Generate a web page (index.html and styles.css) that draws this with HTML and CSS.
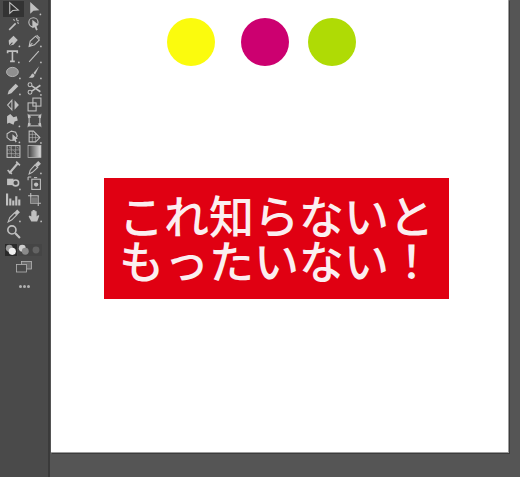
FILE: index.html
```html
<!DOCTYPE html>
<html lang="ja">
<head>
<meta charset="utf-8">
<title>Illustrator</title>
<link rel="stylesheet" href="styles.css">
</head>
<body>
<div class="app">
  <aside class="toolbar">
    <div class="tools">
      <span class="tool active"><svg viewBox="0 0 14 14"><path d="M3.500 1.500v10l2.800-2.600 5.200-.4z" class="ln"/></svg></span>
      <span class="tool"><svg viewBox="0 0 14 14"><path d="M3 1v11l3-3 5.500-.3z" class="fl"/><circle cx="12.500" cy="12.500" r=".8" class="fl"/></svg></span>
      <span class="tool"><svg viewBox="0 0 14 14"><path d="M3 12 9 6" class="ln w2"/><path d="M10 1v2M12 3.500h-2M7 2l1 1.500M12 6l-1.500-.8" class="ln"/></svg></span>
      <span class="tool"><svg viewBox="0 0 14 14"><circle cx="6" cy="5" r="4.300" class="ln"/><path d="M5 2.500 11 7.500 8.500 8 10 12 8.500 12.500 7 9 5 10.500z" class="fl"/></svg></span>
      <span class="tool"><svg viewBox="0 0 14 14"><path d="M3 12 2.500 7 7 2.500l4 4L7 11z" class="fl"/><path d="M3 12l3-3" class="dk"/><circle cx="12.500" cy="12.500" r=".8" class="fl"/></svg></span>
      <span class="tool"><svg viewBox="0 0 14 14"><path d="M2 12.500l1-5L8 3l3.500 3.500L7 11zM2 12.500l3-3M9 2l3 3" class="ln"/><circle cx="13" cy="12.500" r=".8" class="fl"/></svg></span>
      <span class="tool"><svg viewBox="0 0 14 14"><path d="M1.500 4V2h9v2M6 2v9.500M3.800 11.500h4.400" class="ln w2"/><circle cx="12" cy="12.500" r=".8" class="fl"/></svg></span>
      <span class="tool"><svg viewBox="0 0 14 14"><path d="M2 12 11 2" class="ln"/><circle cx="13" cy="12.500" r=".8" class="fl"/></svg></span>
      <span class="tool"><svg viewBox="0 0 14 14"><ellipse cx="6" cy="6.500" rx="5.500" ry="4.300" fill="#8f8f8f" stroke="#bdbdbd" stroke-width=".8"/><circle cx="13" cy="12.500" r=".8" class="fl"/></svg></span>
      <span class="tool"><svg viewBox="0 0 14 14"><path d="M11.500 1 6 7.500l1.500 1.500z" class="fl"/><path d="M5.500 8C3.500 8.500 4 11 1.500 11.500 4 12.500 7 12 7 9.500z" class="fl"/><circle cx="13" cy="12.500" r=".8" class="fl"/></svg></span>
      <span class="tool"><svg viewBox="0 0 14 14"><path d="M1.500 12.500 2.500 9 9 2.500l2.500 2.500L5 11.500z" class="fl"/><circle cx="13" cy="12.500" r=".8" class="fl"/></svg></span>
      <span class="tool"><svg viewBox="0 0 14 14"><circle cx="2.800" cy="3.500" r="1.800" class="ln"/><circle cx="2.800" cy="10.500" r="1.800" class="ln"/><path d="M4.500 4.500 12.500 10M4.500 9.500 12.500 4" class="ln w2"/><circle cx="13" cy="13" r=".8" class="fl"/></svg></span>
      <span class="tool"><svg viewBox="0 0 14 14"><path d="M5.500 3v9L1.500 7.500z" class="ln"/><path d="M8 3v9l4-4.500z" class="fl"/></svg></span>
      <span class="tool"><svg viewBox="0 0 14 14"><rect x="1" y="5.500" width="7.500" height="7.500" class="ln"/><rect x="5.500" y="1" width="7.500" height="7.500" class="ln"/></svg></span>
      <span class="tool"><svg viewBox="0 0 14 14"><path d="M1 3 4 1l3 3 3-1 1 4-3 1-1 3-4-2-2 1z" class="fl"/><circle cx="12.500" cy="12.500" r=".8" class="fl"/></svg></span>
      <span class="tool"><svg viewBox="0 0 14 14"><rect x="2" y="2" width="10" height="10" class="ln"/><path d="M.5.500 4 4l-3 1zM13.500.500 10 4l3 1zM.5 13.500 4 10l-3-1zM13.500 13.500 10 10l3-1z" class="fl"/></svg></span>
      <span class="tool"><svg viewBox="0 0 14 14"><path d="M1 4.500 5 2l4 1 1.500 3.500-2.500 4H4L1 8z" class="ln"/><path d="M6 5l5 4-2 .5 1 2.500-1.200.5-1-2.500L6 11z" class="fl"/><circle cx="12.500" cy="12.500" r=".8" class="fl"/></svg></span>
      <span class="tool"><svg viewBox="0 0 14 14"><path d="M2 2h4l6 6-4 4H2z" class="ln"/><path d="M2 5h7M2 8h10M5 2v10M8 4v8" class="ln thin"/><circle cx="13" cy="13" r=".8" class="fl"/></svg></span>
      <span class="tool"><svg viewBox="0 0 14 14"><rect x="1" y="1.500" width="12" height="11" class="ln"/><path d="M1 5.500h12M1 9h12M5 1.500v11M9 1.500v11M3 3l2 1M7 6l2 2M10 10l2 1M3 7l1 1M7 10l1 1M10 3l2 1" class="ln thin"/></svg></span>
      <span class="tool"><svg viewBox="0 0 14 14"><defs><linearGradient id="grad"><stop offset="0" stop-color="#3a3a3a"/><stop offset="1" stop-color="#e0e0e0"/></linearGradient></defs><rect x="1" y="1.500" width="12" height="11" fill="url(#grad)" stroke="#bdbdbd" stroke-width=".7"/></svg></span>
      <span class="tool"><svg viewBox="0 0 14 14"><path d="M3 12.500 11 3" class="ln w3"/><path d="M1.500 9.500 5.500 13M9.500 1.500 13 5" class="ln w2"/></svg></span>
      <span class="tool"><svg viewBox="0 0 14 14"><path d="M2 13l1-3.500 4.500-5 2.500 2.500-5 4.500z" class="ln"/><path d="M7.500 4 10.500 1l2.500 2.500L10 6.500z" class="fl"/><circle cx="13" cy="12.500" r=".8" class="fl"/></svg></span>
      <span class="tool"><svg viewBox="0 0 14 14"><rect x="1" y="2.500" width="6" height="6" class="fl"/><circle cx="9" cy="6.500" r="3.500" class="fl"/><circle cx="9" cy="6.500" r="2" fill="#4a4a4a"/><circle cx="13" cy="12.500" r=".8" class="fl"/></svg></span>
      <span class="tool"><svg viewBox="0 0 14 14"><path d="M1 1h3M1 1v3" class="ln"/><rect x="4.500" y="3" width="8" height="9.500" class="ln"/><circle cx="8.500" cy="8" r="2" class="fl"/><path d="M6.500 1.500h3" class="ln"/></svg></span>
      <span class="tool"><svg viewBox="0 0 14 14"><path d="M1 1.500v11M4 6v6.500M6.800 8v4.500M9.600 4v8.500M12.400 7v5.500" class="ln w3"/></svg></span>
      <span class="tool"><svg viewBox="0 0 14 14"><path d="M1 3.500h9.500V13M3.500 1v9.500H13" class="ln"/><rect x="3.500" y="5" width="7" height="5.500" fill="#777"/></svg></span>
      <span class="tool"><svg viewBox="0 0 14 14"><path d="M2 13l1.500-4L8 4.500l2 2L5.500 11z" class="ln"/><path d="M8 4l2.500-2.500L13 4l-2.500 2.500z" class="fl"/><circle cx="13" cy="12.500" r=".8" class="fl"/></svg></span>
      <span class="tool"><svg viewBox="0 0 14 14"><path d="M4 12.500 1.500 8l1-1L4 8V3h1.200v3.500V1.800h1.300v4.700V2h1.300v4.500V3h1.200v5l1.500-1.500 1 .8L9.500 12.500z" class="fl"/><circle cx="13.200" cy="12.500" r=".8" class="fl"/></svg></span>
      <span class="tool"><svg viewBox="0 0 14 14"><circle cx="5.500" cy="5.500" r="3.800" class="ln w2"/><path d="M8.500 8.500 13 13" class="ln w3"/></svg></span>
    </div>
    <div class="colors">
      <span class="mode active"><svg viewBox="0 0 14 14"><circle cx="5" cy="5" r="4" fill="#9a9a9a"/><circle cx="8.500" cy="8.500" r="4.200" fill="#f0f0f0"/></svg></span>
      <span class="mode"><svg viewBox="0 0 14 14"><circle cx="5" cy="5" r="4" fill="#cfcfcf"/><circle cx="8.500" cy="8.500" r="4" fill="#8a8a8a"/></svg></span>
      <span class="mode"><svg viewBox="0 0 14 14"><circle cx="7" cy="7" r="4" fill="#636363"/></svg></span>
    </div>
    <svg class="screens" viewBox="0 0 16 12"><rect x="5.500" y=".5" width="10" height="7.500" fill="#6a6a6a" stroke="#b5b5b5" stroke-width=".8"/><rect x=".5" y="3.500" width="10" height="7.500" fill="#4a4a4a" stroke="#b5b5b5" stroke-width=".8"/></svg>
    <div class="more"><i></i><i></i><i></i></div>
  </aside>
  <main class="pasteboard">
    <section class="artboard">
      <div class="dots">
        <span class="dot yellow"></span>
        <span class="dot magenta"></span>
        <span class="dot lime"></span>
      </div>
      <h1 class="banner"><span class="line">これ知らないと</span><span class="line">もったいない！</span></h1>
    </section>
  </main>
</div>
</body>
</html>
```

FILE: styles.css
```css
html, body {
  margin: 0;
  height: 100%;
  overflow: hidden;
}
.app {
  display: flex;
  width: 520px;
  height: 477px;
  background: #555555;
}
.toolbar {
  width: 48px;
  flex: none;
  background: #4a4a4a;
  border-right: 2px solid #3a3a3a;
  display: flex;
  flex-direction: column;
  align-items: center;
  padding-top: 1px;
}
.tools {
  display: grid;
  grid-template-columns: 21px 21px;
  grid-auto-rows: 15.9px;
  align-self: flex-start;
  margin-left: 2.500px;
  filter: blur(.45px);
}
.tool {
  display: flex;
  align-items: center;
  justify-content: center;
}
.tool svg {
  width: 15px;
  height: 15px;
}
.tool.active {
  background: #333333;
}
.ln {
  fill: none;
  stroke: #c0c0c0;
  stroke-width: 1;
}
.ln.thin { stroke-width: .5; }
.ln.w2 { stroke-width: 1.500; }
.ln.w3 { stroke-width: 2; }
.fl { fill: #c0c0c0; }
.dk { fill: none; stroke: #4a4a4a; stroke-width: 1; }
.colors {
  display: flex;
  gap: .5px;
  align-self: flex-start;
  margin: 5px 0 0 5px;
  filter: blur(.4px);
}
.mode {
  width: 12px;
  height: 12px;
  display: block;
  background: #454545;
}
.mode.active { background: #2b2b2b; }
.mode svg { display: block; width: 12px; height: 12px; }
.screens {
  width: 16px;
  height: 12px;
  margin-top: 5px;
  filter: blur(.4px);
}
.more {
  display: flex;
  gap: 1px;
  margin-top: 12px;
  filter: blur(.4px);
}
.more i {
  width: 3px;
  height: 3px;
  border-radius: 50%;
  background: #b0b0b0;
}
.pasteboard {
  flex: 1;
  padding-left: 1px;
  min-width: 0;
}
.artboard {
  width: 458px;
  height: 453px;
  box-sizing: border-box;
  background: #ffffff;
  border-right: 1px solid #9c9c9c;
  border-bottom: 1px solid #9c9c9c;
  box-shadow: 1px 1px 0 #3c3c3c;
  padding-top: 18px;
}
.dots {
  display: flex;
  margin-left: 116px;
}
.dot {
  width: 48px;
  height: 48px;
  border-radius: 50%;
}
.yellow { background: #fbfb0d; }
.magenta { background: #cc0070; margin-left: 26px; }
.lime { background: #afdb05; margin-left: 19px; }
.banner {
  width: 345px;
  height: 121px;
  margin: 112px 0 0 53px;
  background: #e00012;
  color: #fbeef0;
  font-family: "Noto Sans CJK JP", sans-serif;
  font-weight: 500;
  font-size: 45px;
  text-align: center;
  padding-top: 14px;
  box-sizing: border-box;
  white-space: nowrap;
  display: flex;
  flex-direction: column;
  align-items: center;
}
.line {
  display: block;
  height: 45px;
  line-height: 45px;
}
```
